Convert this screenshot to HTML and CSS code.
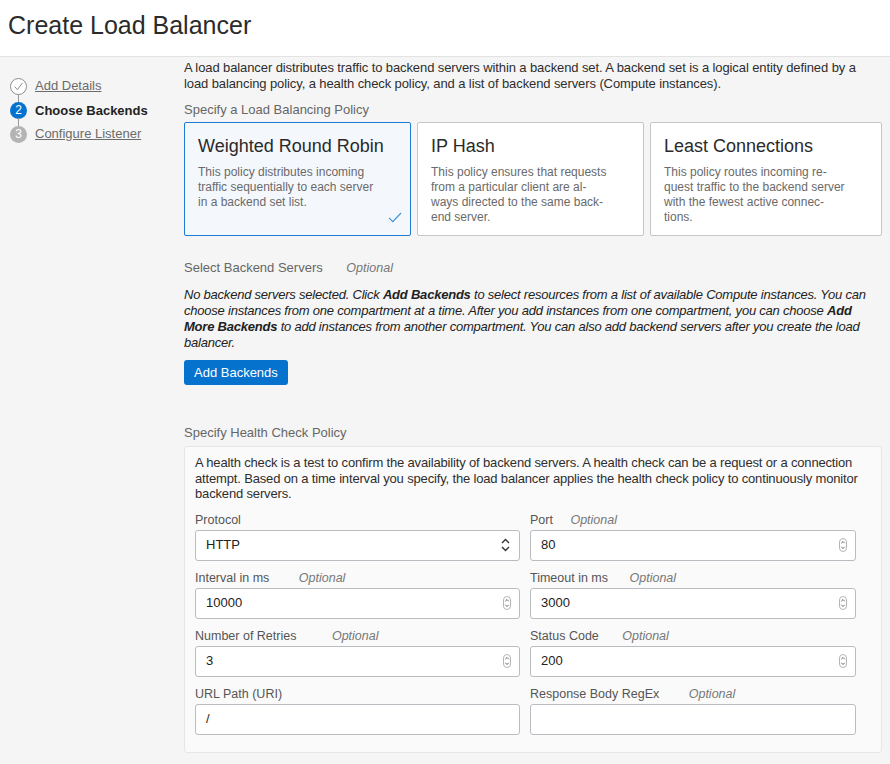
FILE: index.html
```html
<!DOCTYPE html>
<html lang="en">
<head>
<meta charset="utf-8">
<title>Create Load Balancer</title>
<link rel="stylesheet" href="styles.css">
</head>
<body>
<header class="page-header">
  <h1 class="page-title">Create Load Balancer</h1>
</header>
<div class="layout">
  <nav class="steps">
    <div class="step step-done">
      <span class="step-dot">
        <svg width="17" height="17" viewBox="0 0 17 17"><circle cx="8.5" cy="8.5" r="8" fill="#fff" stroke="#8c8c8c" stroke-width="1"/><path d="M4.6 8.6 L7.4 11.6 L12.6 4.8" fill="none" stroke="#8c8c8c" stroke-width="1"/></svg>
      </span>
      <a class="step-link" href="#">Add Details</a>
    </div>
    <div class="step step-current">
      <span class="step-dot step-dot-blue">2</span>
      <span class="step-label">Choose Backends</span>
    </div>
    <div class="step step-todo">
      <span class="step-dot step-dot-gray">3</span>
      <a class="step-link" href="#">Configure Listener</a>
    </div>
  </nav>
  <main class="main">
    <p class="intro">A load balancer distributes traffic to backend servers within a backend set. A backend set is a logical entity defined by a load balancing policy, a health check policy, and a list of backend servers (Compute instances).</p>

    <div class="section-label">Specify a Load Balancing Policy</div>
    <div class="cards">
      <div class="card card-selected">
        <div class="card-title">Weighted Round Robin</div>
        <div class="card-desc">This policy distributes incoming<br>traffic sequentially to each server<br>in a backend set list.</div>
        <svg class="card-check" width="14" height="11" viewBox="0 0 14 11"><path d="M1 5.8 L4.8 9.6 L13 1" fill="none" stroke="#3a8fd9" stroke-width="1.1"/></svg>
      </div>
      <div class="card">
        <div class="card-title">IP Hash</div>
        <div class="card-desc">This policy ensures that requests<br>from a particular client are al-<br>ways directed to the same back-<br>end server.</div>
      </div>
      <div class="card">
        <div class="card-title">Least Connections</div>
        <div class="card-desc">This policy routes incoming re-<br>quest traffic to the backend server<br>with the fewest active connec-<br>tions.</div>
      </div>
    </div>

    <div class="section-label section-label-backends">Select Backend Servers <em class="optional">Optional</em></div>
    <p class="backends-note">No backend servers selected. Click <b>Add Backends</b> to select resources from a list of available Compute instances. You can choose instances from one compartment at a time. After you add instances from one compartment, you can choose <b>Add More Backends</b> to add instances from another compartment. You can also add backend servers after you create the load balancer.</p>
    <button class="btn-primary" type="button">Add Backends</button>

    <div class="section-label section-label-health">Specify Health Check Policy</div>
    <div class="panel">
      <p class="panel-text">A health check is a test to confirm the availability of backend servers. A health check can be a request or a connection attempt. Based on a time interval you specify, the load balancer applies the health check policy to continuously monitor backend servers.</p>
      <div class="form-grid">
        <div class="field">
          <div class="field-label">Protocol</div>
          <div class="input">
            <span class="input-value">HTTP</span>
            <svg class="select-arrows" width="9" height="14" viewBox="0 0 9 14"><path d="M1 5 L4.5 1.5 L8 5 M1 9 L4.5 12.5 L8 9" fill="none" stroke="#333" stroke-width="1.4"/></svg>
          </div>
        </div>
        <div class="field">
          <div class="field-label">Port <em class="optional opt-port">Optional</em></div>
          <div class="input">
            <span class="input-value">80</span>
            <svg class="spinner" width="8" height="14" viewBox="0 0 8 14"><rect x="0.5" y="0.5" width="7" height="13" rx="3.5" fill="#fff" stroke="#b5b5b5"/><path d="M2.3 5.2 L4 3.5 L5.7 5.2 M2.3 8.8 L4 10.5 L5.7 8.8" fill="none" stroke="#555" stroke-width="0.9"/></svg>
          </div>
        </div>
        <div class="field">
          <div class="field-label">Interval in ms <em class="optional opt-interval">Optional</em></div>
          <div class="input">
            <span class="input-value">10000</span>
            <svg class="spinner" width="8" height="14" viewBox="0 0 8 14"><rect x="0.5" y="0.5" width="7" height="13" rx="3.5" fill="#fff" stroke="#b5b5b5"/><path d="M2.3 5.2 L4 3.5 L5.7 5.2 M2.3 8.8 L4 10.5 L5.7 8.8" fill="none" stroke="#555" stroke-width="0.9"/></svg>
          </div>
        </div>
        <div class="field">
          <div class="field-label">Timeout in ms <em class="optional opt-timeout">Optional</em></div>
          <div class="input">
            <span class="input-value">3000</span>
            <svg class="spinner" width="8" height="14" viewBox="0 0 8 14"><rect x="0.5" y="0.5" width="7" height="13" rx="3.5" fill="#fff" stroke="#b5b5b5"/><path d="M2.3 5.2 L4 3.5 L5.7 5.2 M2.3 8.8 L4 10.5 L5.7 8.8" fill="none" stroke="#555" stroke-width="0.9"/></svg>
          </div>
        </div>
        <div class="field">
          <div class="field-label">Number of Retries <em class="optional opt-retries">Optional</em></div>
          <div class="input">
            <span class="input-value">3</span>
            <svg class="spinner" width="8" height="14" viewBox="0 0 8 14"><rect x="0.5" y="0.5" width="7" height="13" rx="3.5" fill="#fff" stroke="#b5b5b5"/><path d="M2.3 5.2 L4 3.5 L5.7 5.2 M2.3 8.8 L4 10.5 L5.7 8.8" fill="none" stroke="#555" stroke-width="0.9"/></svg>
          </div>
        </div>
        <div class="field">
          <div class="field-label">Status Code <em class="optional opt-status">Optional</em></div>
          <div class="input">
            <span class="input-value">200</span>
            <svg class="spinner" width="8" height="14" viewBox="0 0 8 14"><rect x="0.5" y="0.5" width="7" height="13" rx="3.5" fill="#fff" stroke="#b5b5b5"/><path d="M2.3 5.2 L4 3.5 L5.7 5.2 M2.3 8.8 L4 10.5 L5.7 8.8" fill="none" stroke="#555" stroke-width="0.9"/></svg>
          </div>
        </div>
        <div class="field">
          <div class="field-label">URL Path (URI)</div>
          <div class="input">
            <span class="input-value">/</span>
          </div>
        </div>
        <div class="field">
          <div class="field-label">Response Body RegEx <em class="optional opt-regex">Optional</em></div>
          <div class="input">
            <span class="input-value"></span>
          </div>
        </div>
      </div>
    </div>
  </main>
</div>
</body>
</html>
```

FILE: styles.css
```css
* { box-sizing: border-box; }

html, body {
  margin: 0;
  padding: 0;
}

body {
  background: #f5f5f5;
  font-family: "Liberation Sans", Arial, sans-serif;
  color: #333;
  font-size: 13px;
  line-height: 16px;
}

.page-header {
  background: #fff;
  height: 57px;
  border-bottom: 1px solid #e3e3e3;
  padding: 0 8px;
}

.page-title {
  margin: 0;
  padding-top: 10px;
  font-size: 25px;
  line-height: 30px;
  font-weight: normal;
  color: #2b2b2b;
}

.layout {
  display: flex;
  padding-right: 8px;
}

/* Steps */
.steps {
  width: 184px;
  flex: none;
  padding: 17px 0 0 10px;
}

.step {
  position: relative;
  display: flex;
  align-items: center;
  height: 24px;
}

.step + .step::before {
  content: "";
  position: absolute;
  left: 8px;
  top: -4px;
  width: 1px;
  height: 8px;
  background: #9a9a9a;
}

.step-dot {
  width: 17px;
  height: 17px;
  flex: none;
  border-radius: 50%;
  display: flex;
  align-items: center;
  justify-content: center;
  font-size: 12px;
  color: #fff;
  margin-right: 8px;
}

.step-dot svg { display: block; }

.step-dot-blue { background: #0572ce; }
.step-dot-gray { background: #b4b4b4; }

.step-link {
  color: #6b6b6b;
  text-decoration: underline;
  font-size: 13px;
}

.step-label {
  font-weight: bold;
  color: #222;
  font-size: 13px;
  padding-top: 2px;
}

/* Main */
.main {
  width: 698px;
  flex: none;
}

.intro {
  margin: 3px 0 0;
  line-height: 16px;
  color: #2e2e2e;
  letter-spacing: -0.1px;
}

.section-label {
  margin-top: 10px;
  color: #666;
  font-size: 13px;
  line-height: 16px;
}

.optional {
  font-style: italic;
  color: #777;
  margin-left: 20px;
  font-size: 12.5px;
}

.cards {
  display: grid;
  grid-template-columns: 227px 227px 232px;
  gap: 6px;
  margin-top: 4px;
}

.card {
  position: relative;
  height: 114px;
  background: #fff;
  border: 1px solid #c4c6ca;
  border-radius: 2px;
  padding: 12px 13px 0;
}

.card-selected {
  background: #f4f8fd;
  border-color: #1d7bd1;
}

.card-title {
  font-size: 18px;
  line-height: 22px;
  color: #2a2a2a;
}

.card-desc {
  margin-top: 8px;
  font-size: 12px;
  line-height: 15px;
  color: #6a6a6a;
}

.card-check {
  position: absolute;
  right: 8px;
  bottom: 12px;
}

.section-label-backends {
  margin-top: 24px;
}

.backends-note {
  margin: 11px 0 0;
  font-style: italic;
  font-size: 13px;
  line-height: 16px;
  color: #222;
  letter-spacing: -0.22px;
}

.backends-note b { font-weight: bold; }

.btn-primary {
  display: block;
  margin-top: 9px;
  height: 25px;
  padding: 0 10px;
  border: 0;
  border-radius: 3px;
  background: #0572ce;
  color: #fff;
  font-family: inherit;
  font-size: 13px;
}

.section-label-health {
  margin-top: 40px;
}

.panel {
  margin-top: 5px;
  background: #fafafa;
  border: 1px solid #e6e6e6;
  border-radius: 3px;
  padding: 8px 10px 17px;
}

.panel-text {
  margin: 0;
  line-height: 15.5px;
  color: #2e2e2e;
  letter-spacing: -0.16px;
}

.form-grid {
  display: grid;
  grid-template-columns: 325px 326px;
  column-gap: 10px;
  row-gap: 9px;
  margin-top: 10px;
}

.field-label {
  font-size: 12.5px;
  line-height: 17px;
  color: #555;
  height: 17px;
}

.field-label .optional { margin-left: 14px; }
.field-label .opt-interval { margin-left: 26px; }
.field-label .opt-retries { margin-left: 32px; }
.field-label .opt-timeout { margin-left: 18px; }
.field-label .opt-status { margin-left: 20px; }
.field-label .opt-regex { margin-left: 26px; }

.input {
  margin-top: 1px;
  height: 31px;
  background: #fff;
  border: 1px solid #b9bcc0;
  border-radius: 3px;
  display: flex;
  align-items: center;
  padding: 0 8px 0 10px;
}

.input-value {
  flex: 1;
  color: #222;
  font-size: 13px;
}

.spinner, .select-arrows { flex: none; display: block; }
.select-arrows { margin-right: 1px; }
```
